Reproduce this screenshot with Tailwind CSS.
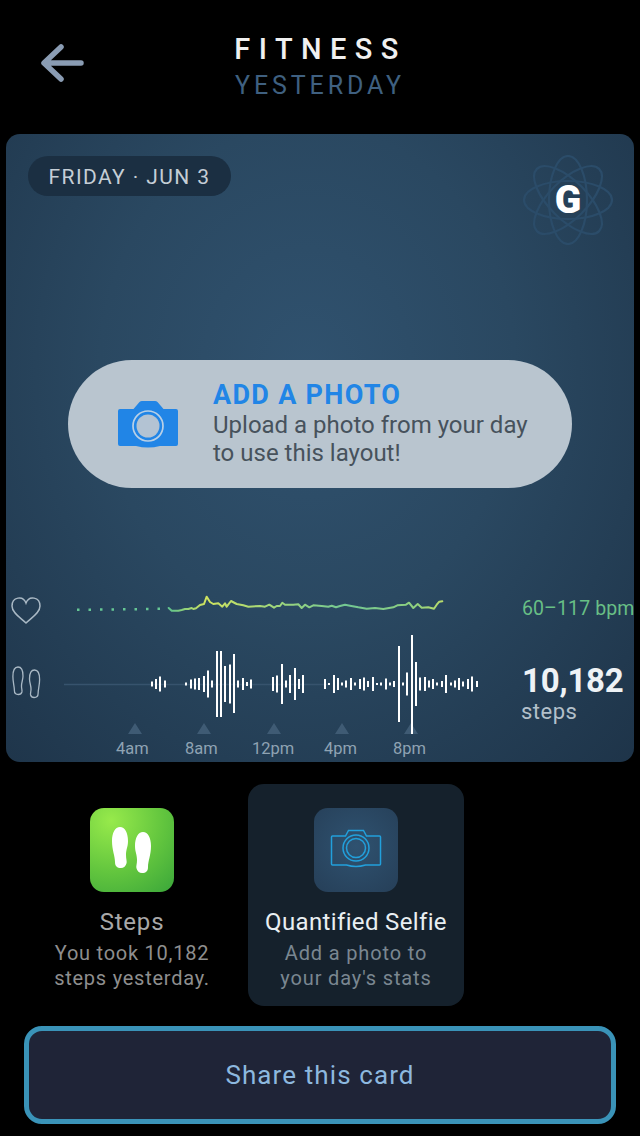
<!DOCTYPE html>
<html>
<head>
<meta charset="utf-8">
<script src="https://cdn.jsdelivr.net/npm/@tailwindcss/browser@4"></script>
</head>
<body class="m-0 bg-black">
<div class="w-[640px] h-[1136px] bg-black overflow-hidden font-['Roboto',sans-serif]">
  <header class="h-[134px] grid grid-cols-[120px_1fr_120px]">
    <div class="pl-[38px] pt-[42px]">
      <svg width="48" height="44" viewBox="38 42 48 44" fill="none" stroke="#8a9cb3" stroke-width="5.5" stroke-linecap="round" stroke-linejoin="round"><path d="M81 63H45M61 47L44 63L61 79"/></svg>
    </div>
    <div class="flex flex-col items-center pt-[31px]">
      <div class="text-[29px] leading-[36px] font-medium tracking-[8.4px] text-[#f0f0f0] pl-[1px]">FITNESS</div>
      <div class="text-[25px] leading-[36px] mt-[1px] tracking-[3.9px] text-[#3f6080]">YESTERDAY</div>
    </div>
    <div></div>
  </header>

  <section class="relative mx-[6px] h-[628px] rounded-[14px] overflow-hidden bg-[radial-gradient(ellipse_at_48%_38%,#30526f_0%,#2a4861_45%,#1e3449_100%)]">
    <div class="flex justify-between items-start pl-[22px] pr-[21px] pt-[21px]">
      <div class="mt-[1px] h-[40px] w-[203px] pt-[3px] rounded-full bg-[#1b2f42] flex items-center justify-center text-[21px] tracking-[1.4px] text-[#c5ced6]">FRIDAY · JUN 3</div>
      <div class="relative w-[90px] h-[90px]">
        <svg width="90" height="90" viewBox="0 0 90 90" fill="none" stroke="#2b4c69" stroke-width="2.2">
          <ellipse cx="45" cy="45" rx="44" ry="19"/>
          <ellipse cx="45" cy="45" rx="44" ry="19" transform="rotate(45 45 45)"/>
          <ellipse cx="45" cy="45" rx="44" ry="19" transform="rotate(90 45 45)"/>
          <ellipse cx="45" cy="45" rx="44" ry="19" transform="rotate(135 45 45)"/>
        </svg>
        <span class="absolute inset-0 flex items-center justify-center text-[39px] font-black text-white">G</span>
      </div>
    </div>

    <div class="mt-[115px] ml-[62px] w-[504px] h-[128px] rounded-full bg-[#b9c5cf] flex items-center">
      <svg class="ml-[49px] shrink-0" width="62" height="47" viewBox="117 397 62 47">
        <path fill="#2185e6" d="M143 397h12q1.500 0 2.500 1l6 7h12.500q2 0 2 2v33q0 2-2 2h-16q-12 3-24 0h-16q-2 0-2-2v-33q0-2 2-2h13.500l6-7q1-1 2.500-1z"/>
        <circle cx="148" cy="422" r="15" fill="none" stroke="#b9d0e6" stroke-width="1.700"/>
        <circle cx="148" cy="422" r="11.500" fill="#b3c3d3"/>
      </svg>
      <div class="ml-[34px] -mt-[2px]">
        <div class="text-[27px] leading-[30px] font-bold tracking-[1.3px] text-[#2185e6]">ADD A PHOTO</div>
        <div class="mt-[1px] text-[24px] leading-[28px] text-[#47525c]">Upload a photo from your day<br>to use this layout!</div>
      </div>
    </div>

    <div class="relative mt-[102px] h-[172px]">
      <svg class="block" width="628" height="172" viewBox="6 590 628 172" fill="none">
        <defs>
          <linearGradient id="hr" gradientUnits="userSpaceOnUse" x1="170" y1="0" x2="442" y2="0">
            <stop offset="0" stop-color="#62c58d"/>
            <stop offset=".13" stop-color="#cfe35f"/>
            <stop offset=".35" stop-color="#a5d878"/>
            <stop offset=".65" stop-color="#72c793"/>
            <stop offset=".9" stop-color="#8fd07f"/>
            <stop offset="1" stop-color="#b9dc6c"/>
          </linearGradient>
        </defs>
        <path d="M12 606c0-9 11-11 14-3c3-8 14-6 14 3c0 7-9 12-14 17c-5-5-14-10-14-17z" stroke="#a9b8c4" stroke-width="1.500"/>
        <path d="M77 609.800h2.500M88.500 609.800H91M100 609.500h2.500M111.500 609.500h2.500M123 609.300h2.500M134.500 609.200h2.500M146 609h2.500M157.500 608.800h2.500" stroke="#66c795" stroke-width="2.500"/>
        <path stroke="url(#hr)" stroke-width="2" stroke-linejoin="round" stroke-linecap="round" d="M168.700 608L171.700 610.700L178.300 610.700L181.700 610L185 609L188.300 609L191.700 608L193.300 609L196 608.300L200 605L204 604L206.700 596.700L210 602L213.300 604L218.300 603.300L222.300 606.700L225 603.300L226.700 606.700L231 601L236.700 604L243.300 605.300L248.300 606.700L260 606L265 606.700L269.300 604.700L274 607.700L276.700 606L280 606L282.300 602.700L285 604.700L293.300 604.700L298.300 604.300L301.700 608L305 604.700L309.300 607.300L313.300 605.300L321.700 606L328.300 606.700L331.700 605.700L336 607.300L340 606L345 604.700L350 605.700L358.300 607.300L366.700 608.700L375 608L383.300 609L393.300 607.300L397.300 605.300L406 604.700L409 602.700L413.300 608L417.700 604L421.700 607.700L428.300 607.300L434 608.700L436.700 604.700L439.300 601.700L442.300 601.300"/>
        <path d="M18 667c3 0 5 3 5 9c0 4-1.500 6-1.500 10c0 3 .8 4 .4 6c-.4 1.500-2 2.500-3.500 2.500c-2.500 0-4-1.500-4-4c0-4-1.500-8-1.500-14c0-6 2-9.500 5.100-9.500z" stroke="#a9b8c4" stroke-width="1.300"/>
        <path d="M34.500 670c-3 0-5 3-5 9c0 4 1.500 6 1.500 10c0 3-.8 4-.4 6c.4 1.500 2 2.500 3.500 2.500c2.500 0 4-1.500 4-4c0-4 1.500-8 1.500-14c0-6-2-9.500-5.100-9.500z" stroke="#a9b8c4" stroke-width="1.300"/>
        <path d="M64 684.500H330" stroke="#37536d" stroke-width="1.500"/>
        <path fill="#3f5b74" d="M128 734l7-11l7 11zM197 734l7-11l7 11zM267 734l7-11l7 11zM335 734l7-11l7 11zM404 734l7-11l7 11z"/>
        <path stroke="#ffffff" stroke-width="2" d="M152 681.500v5M156 679v10M160 676.500v15M165 680.500v7M186 682.500v3M191 679.500v9M195 678.500v11M199 678v12M204 676v16M208 670.500v27M212 680.500v7M217 651v66M221 651v66M225 666v36M230 664.500v39M234 654v59M238 680.500v7M243 678v12M247 682v4M251 679.500v9M273 677v14M277 675.500v17M282 664v40M286 680.500v7M290 675v18M295 668v32M299 679v10M303 675v18M325 679v10M329 683v2M334 675v18M338 678v12M342 682.500v3M346 680.500v7M351 678v12M355 682.500v3M360 679v10M364 677.500v13M368 681v6M373 677v14M377 683v2M381 682.500v3M386 678.500v11M390 682.500v3M394 681v6M399 646v76M403 682.500v3M407 672.500v23M412 635v99M416 662v44M420 677.500v13M425 677v14M429 680.500v7M433 679v10M437 682.500v3M442 681v6M446 675v18M451 682.500v3M455 680.500v7M459 678v12M463 681.500v5M468 679v10M472 676.500v15M477 681v6"/>
      </svg>
      <div class="absolute left-[516px] top-[7px] text-[19.500px] leading-[24px] tracking-[.1px] text-[#68bf85] whitespace-nowrap">60–117 bpm</div>
      <div class="absolute left-[516px] top-[71px] text-[33px] leading-[40px] font-bold tracking-[-.2px] text-[#eef2f5]">10,182</div>
      <div class="absolute left-[515px] top-[108px] text-[22px] leading-[28px] tracking-[.5px] text-[#b3c0ca]">steps</div>
      <div class="absolute left-0 right-0 top-[149px] h-[20px] text-[#8fa3b3] text-[16.500px] leading-[20px]">
        <span class="absolute left-[110px]">4am</span>
        <span class="absolute left-[179px]">8am</span>
        <span class="absolute left-[246px]">12pm</span>
        <span class="absolute left-[318px]">4pm</span>
        <span class="absolute left-[387px]">8pm</span>
      </div>
    </div>
  </section>

  <section class="mt-[22px] ml-[16px] flex h-[222px]">
    <div class="w-[232px] flex flex-col items-center pt-[24px]">
      <div class="w-[84px] h-[84px] rounded-[14px] bg-[radial-gradient(circle_at_25%_15%,#97ea4b_0%,#62c53e_55%,#3aa63a_100%)]">
        <svg width="84" height="84" viewBox="90 808 84 84" fill="#ffffff">
          <path d="M120 827c5 0 8 6 8 14c0 6-2 8-2 14c0 4 1 6 .6 8c-.6 3-3 5-5.600 5c-4 0-6-2-6-6c0-6-3-12-3-21c0-8 3-14 8-14z"/>
          <path d="M143 832c-5 0-8 6-8 14c0 6 2 8 2 14c0 4-1 6-.6 8c.6 3 3 5 5.600 5c4 0 6-2 6-6c0-6 3-12 3-21c0-8-3-14-8-14z"/>
        </svg>
      </div>
      <div class="mt-[14px] text-[24px] leading-[32px] tracking-[.8px] text-[#a8a8a8]">Steps</div>
      <div class="mt-[3px] text-center text-[20px] leading-[25px] tracking-[.75px] text-[#8e8e8e] whitespace-nowrap">You took 10,182<br>steps yesterday.</div>
    </div>
    <div class="w-[216px] h-[222px] rounded-[16px] bg-[#15212c] flex flex-col items-center pt-[24px]">
      <div class="w-[84px] h-[84px] rounded-[14px] bg-[radial-gradient(circle_at_50%_45%,#2f5270_0%,#263f58_100%)]">
        <svg width="84" height="84" viewBox="314 808 84 84" fill="none" stroke="#22a0dc" stroke-width="1.500">
          <path d="M332.500 836h13l3-5.500h15l3 5.500h13q1 0 1 1v27q0 1-1 1h-14q-9.500 3-19 0h-14q-1 0-1-1v-27q0-1 1-1z"/>
          <circle cx="356" cy="848" r="13"/>
          <circle cx="356" cy="848" r="9.500"/>
        </svg>
      </div>
      <div class="mt-[14px] text-[24px] leading-[32px] tracking-[.35px] text-[#e9eff2] whitespace-nowrap">Quantified Selfie</div>
      <div class="mt-[3px] text-center text-[20px] leading-[25px] tracking-[.85px] text-[#7a8791] whitespace-nowrap">Add a photo to<br>your day's stats</div>
    </div>
  </section>

  <button class="block mt-[20px] ml-[24px] w-[592px] h-[98px] rounded-[18px] border-[5px] border-[#3a93b8] bg-[#1f2437] text-[26px] tracking-[1.1px] text-[#8db8df]">Share this card</button>
</div>
</body>
</html>
